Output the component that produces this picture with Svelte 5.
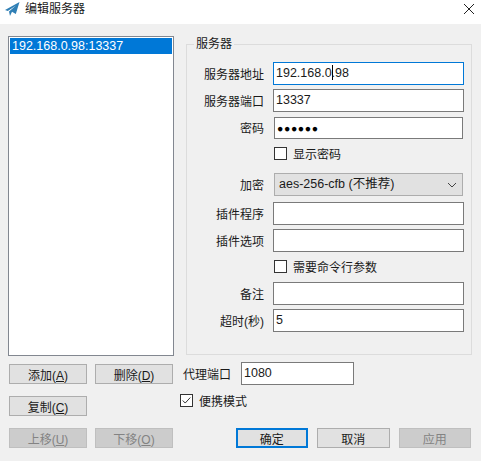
<script lang="ts">
	type Row = { label?: string; value?: string; kind: string; focus?: boolean };
	const rows: Row[] = [
		{ label: '服务器地址', value: '192.168.0.98', kind: 'text', focus: true },
		{ label: '服务器端口', value: '13337', kind: 'text' },
		{ label: '密码', value: '●●●●●●', kind: 'password' },
		{ value: '显示密码', kind: 'check' },
		{ label: '加密', value: 'aes-256-cfb (不推荐)', kind: 'select' },
		{ label: '插件程序', value: '', kind: 'text' },
		{ label: '插件选项', value: '', kind: 'text' },
		{ value: '需要命令行参数', kind: 'check' },
		{ label: '备注', value: '', kind: 'text' },
		{ label: '超时(秒)', value: '5', kind: 'text' }
	];
</script>

<div class="win">
	<header class="title">
		<svg class="logo" viewBox="0 0 16 16" width="16" height="16">
			<path d="M1 9 15.5 1 11.8 13 8 10.8 6 15 5 10.5 12 4.5 3.8 10Z" fill="#2f7fb5" />
		</svg>
		<span>编辑服务器</span>
		<svg class="close" viewBox="0 0 12 12" width="12" height="12">
			<path d="M1 1 11 11M11 1 1 11" stroke="#222" stroke-width="1" fill="none" />
		</svg>
	</header>

	<div class="body">
		<div class="left">
			<div class="list"><div class="item">192.168.0.98:13337</div></div>
			<div class="btns">
				<button>添加(<u>A</u>)</button>
				<button>删除(<u>D</u>)</button>
				<button>复制(<u>C</u>)</button>
				<span></span>
				<button disabled>上移(<u>U</u>)</button>
				<button disabled>下移(<u>O</u>)</button>
			</div>
		</div>

		<div class="right">
			<fieldset>
				<legend>服务器</legend>
				{#each rows as r}
					<div class="row {r.kind}">
						<span class="lbl">{r.label ?? ''}</span>
						{#if r.kind === 'check'}
							<span class="chk"><i class="box"></i>{r.value}</span>
						{:else if r.kind === 'select'}
							<div class="combo">
								{r.value}
								<svg viewBox="0 0 10 6" width="10" height="6">
									<path d="M1 1 5 5 9 1" stroke="#444" fill="none" />
								</svg>
							</div>
						{:else}
							<div class="input" class:focus={r.focus} class:pw={r.kind === 'password'}>
								{#if r.focus}192.168.0<b class="caret"></b>.98{:else}{r.value}{/if}
							</div>
						{/if}
					</div>
				{/each}
			</fieldset>

			<div class="proxy">
				<span>代理端口</span>
				<div class="input">1080</div>
			</div>
			<div class="portable">
				<i class="box">
					<svg viewBox="0 0 13 13" width="11" height="11">
						<path d="M2 6.5 5 9.5 11 3" stroke="#222" stroke-width="1.1" fill="none" />
					</svg>
				</i>
				便携模式
			</div>
			<div class="actions">
				<button class="def">确定</button>
				<button>取消</button>
				<button disabled>应用</button>
			</div>
		</div>
	</div>
</div>

<style>
	:global(body) {
		background: #f0f0f0;
	}

	.win {
		width: 481px;
		height: 461px;
		background: #f0f0f0;
		color: #1a1a1a;
		font-family: 'Liberation Sans', 'Noto Sans CJK SC', sans-serif;
		font-size: 12px;
		overflow: hidden;
	}

	.title {
		height: 24px;
		box-sizing: border-box;
		background: #fff;
		display: flex;
		align-items: center;
		gap: 5px;
		padding: 0 6px 6px 4px;
		margin-bottom: 12px;
		line-height: 16px;
	}

	.close {
		margin-left: auto;
	}

	.body {
		display: flex;
		padding-left: 8px;
	}

	.left {
		width: 166px;
		margin-right: 9px;
	}

	.list {
		height: 320px;
		box-sizing: border-box;
		background: #fff;
		border: 1px solid #828790;
		padding: 1px;
		margin-bottom: 8px;
	}

	.item {
		background: #0078d7;
		color: #fff;
		height: 16px;
		line-height: 16px;
		font-size: 12.5px;
		padding-left: 2px;
	}

	.btns {
		display: grid;
		grid-template-columns: 78px 78px;
		grid-auto-rows: 20px;
		column-gap: 8px;
		row-gap: 12px;
		padding-left: 1px;
	}

	button {
		height: 20px;
		padding: 0;
		font: inherit;
		background: #e1e1e1;
		border: 1px solid #adadad;
		color: #1a1a1a;
	}

	button:disabled {
		background: #ccc;
		border-color: #bfbfbf;
		color: #838383;
	}

	.right {
		width: 288px;
	}

	fieldset {
		margin: 0 0 0 3px;
		box-sizing: border-box;
		width: 286px;
		height: 319px;
		border: 1px solid #dcdcdc;
		padding: 8px 7px 0 0;
	}

	legend {
		margin-left: 7px;
		padding: 0 2px;
		line-height: 16px;
	}

	.row {
		display: grid;
		grid-template-columns: 77px 191px;
		column-gap: 9px;
		align-items: center;
		height: 27px;
		justify-content: end;
	}

	.row.check {
		height: 23px;
		margin-top: 1px;
	}

	.row.select {
		margin-top: 6px;
		margin-bottom: 2px;
	}

	.row.check + .row.text {
		margin-top: 2px;
	}

	.lbl {
		text-align: right;
	}

	.input,
	.combo {
		box-sizing: border-box;
		height: 23px;
		line-height: 21px;
		background: #fff;
		border: 1px solid #7a7a7a;
		padding-left: 2px;
		font-size: 12.5px;
	}

	.input.focus {
		border-color: #0078d7;
	}

	.input.pw {
		margin: 0 1px;
		height: 22px;
		font-size: 10.5px;
		letter-spacing: 0.6px;
		padding-left: 2px;
		color: #000;
	}

	.caret {
		display: inline-block;
		width: 1px;
		height: 15px;
		background: #000;
		vertical-align: -3px;
		margin-right: -1px;
	}

	.combo {
		margin: 0 1px;
		background: #e1e1e1;
		border-color: #adadad;
		display: flex;
		align-items: center;
		justify-content: space-between;
		padding: 0 5px 0 4px;
	}

	.chk,
	.portable {
		display: flex;
		align-items: center;
		gap: 6px;
	}

	.chk {
		margin-left: 1px;
	}

	.box {
		width: 13px;
		height: 13px;
		box-sizing: border-box;
		background: #fff;
		border: 1px solid #333;
		display: flex;
		align-items: center;
		justify-content: center;
	}

	.proxy {
		display: flex;
		align-items: center;
		gap: 10px;
		margin-top: 7px;
	}

	.proxy .input {
		width: 113px;
	}

	.portable {
		margin: 8px 0 0 -3px;
		height: 14px;
	}

	.actions {
		display: flex;
		justify-content: flex-end;
		gap: 9px;
		margin-top: 21px;
	}

	.actions button {
		width: 72.5px;
	}

	.actions .def {
		border: 2px solid #0078d7;
	}
</style>
